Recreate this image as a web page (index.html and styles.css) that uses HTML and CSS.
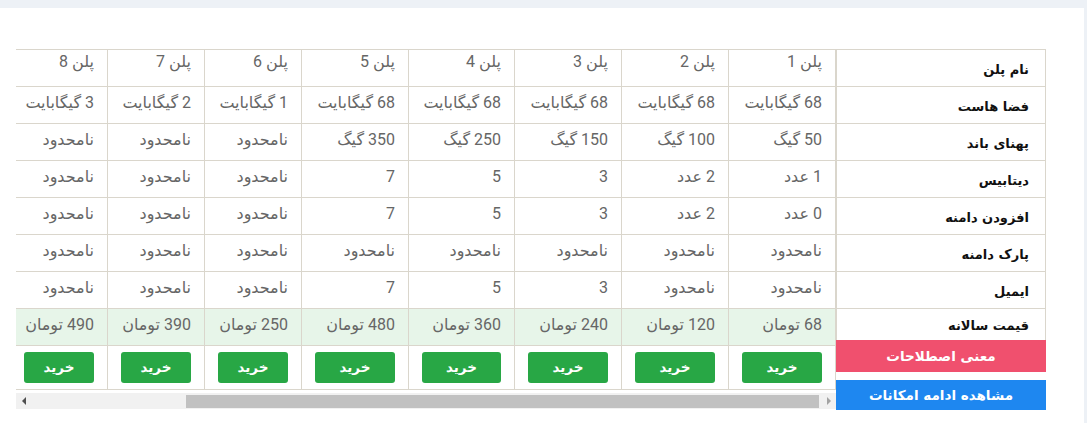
FILE: index.html
```html
<!DOCTYPE html>
<html lang="fa">
<head>
<meta charset="utf-8">
<title>مقایسه پلن‌ها</title>
<link rel="stylesheet" href="styles.css">
</head>
<body>
<div class="page">
  <div class="panel">
    <div class="compare" dir="rtl">
      <div class="labels">
        <table class="label-table">
          <tr><th>نام پلن</th></tr>
          <tr><th>فضا هاست</th></tr>
          <tr><th>پهنای باند</th></tr>
          <tr><th>دیتابیس</th></tr>
          <tr><th>افزودن دامنه</th></tr>
          <tr><th>پارک دامنه</th></tr>
          <tr><th>ایمیل</th></tr>
          <tr class="price-label"><th>قیمت سالانه</th></tr>
        </table>
        <a class="side-btn btn-terms">معنی اصطلاحات</a>
        <a class="side-btn btn-more">مشاهده ادامه امکانات</a>
      </div>
      <div class="plans-area">
        <div class="plans-viewport">
          <table class="plans">
            <colgroup>
              <col class="c-wide"><col class="c-wide"><col class="c-wide"><col class="c-mid"><col class="c-wide"><col class="c-narrow"><col class="c-narrow"><col class="c-narrow">
            </colgroup>
            <thead>
              <tr class="head-row"><th>پلن 1</th><th>پلن 2</th><th>پلن 3</th><th>پلن 4</th><th>پلن 5</th><th>پلن 6</th><th>پلن 7</th><th>پلن 8</th></tr>
            </thead>
            <tbody>
              <tr><td>68 گیگابایت</td><td>68 گیگابایت</td><td>68 گیگابایت</td><td>68 گیگابایت</td><td>68 گیگابایت</td><td>1 گیگابایت</td><td>2 گیگابایت</td><td>3 گیگابایت</td></tr>
              <tr><td>50 گیگ</td><td>100 گیگ</td><td>150 گیگ</td><td>250 گیگ</td><td>350 گیگ</td><td>نامحدود</td><td>نامحدود</td><td>نامحدود</td></tr>
              <tr><td>1 عدد</td><td>2 عدد</td><td>3</td><td>5</td><td>7</td><td>نامحدود</td><td>نامحدود</td><td>نامحدود</td></tr>
              <tr><td>0 عدد</td><td>2 عدد</td><td>3</td><td>5</td><td>7</td><td>نامحدود</td><td>نامحدود</td><td>نامحدود</td></tr>
              <tr><td>نامحدود</td><td>نامحدود</td><td>نامحدود</td><td>نامحدود</td><td>نامحدود</td><td>نامحدود</td><td>نامحدود</td><td>نامحدود</td></tr>
              <tr><td>نامحدود</td><td>نامحدود</td><td>3</td><td>5</td><td>7</td><td>نامحدود</td><td>نامحدود</td><td>نامحدود</td></tr>
              <tr class="price-row"><td>68 تومان</td><td>120 تومان</td><td>240 تومان</td><td>360 تومان</td><td>480 تومان</td><td>250 تومان</td><td>390 تومان</td><td>490 تومان</td></tr>
              <tr class="buy-row"><td><a class="buy">خرید</a></td><td><a class="buy">خرید</a></td><td><a class="buy">خرید</a></td><td><a class="buy">خرید</a></td><td><a class="buy">خرید</a></td><td><a class="buy">خرید</a></td><td><a class="buy">خرید</a></td><td><a class="buy">خرید</a></td></tr>
            </tbody>
          </table>
        </div>
        <div class="hscroll" dir="ltr">
          <span class="hs-btn"><span class="tri tri-left"></span></span>
          <div class="hs-track"><div class="hs-thumb"></div></div>
          <span class="hs-btn"><span class="tri tri-right"></span></span>
        </div>
      </div>
    </div>
  </div>
</div>
</body>
</html>
```
FILE: styles.css
```css
html, body {
  margin: 0;
  padding: 0;
}
body {
  background: #edf1f6;
  font-family: Roboto, "DejaVu Sans", sans-serif;
}
.page {
  padding-top: 8px;
  height: 415px;
}
.panel {
  background: #ffffff;
  width: 1084px;
  height: 415px;
  box-sizing: border-box;
  padding: 41px 38px 0 16px;
}
.compare {
  display: flex;
  align-items: flex-start;
}

/* label column */
.labels {
  width: 210px;
  flex: none;
}
.label-table {
  border-collapse: collapse;
  width: 210px;
}
.label-table th {
  border: 1px solid #dad6cc;
  height: 37px;
  padding: 2px 16px 0;
  text-align: right;
  font-family: "DejaVu Sans", sans-serif;
  font-weight: 700;
  font-size: 13px;
  color: #111;
  box-sizing: border-box;
}
.label-table .price-label th {
  height: 31px;
  border-bottom: none;
}
.side-btn {
  display: block;
  color: #fff;
  text-align: center;
  font-family: "DejaVu Sans", sans-serif;
  font-weight: 700;
  font-size: 13.5px;
}
.btn-terms {
  background: #f0506e;
  height: 32px;
  line-height: 32px;
}
.btn-more {
  background: #1e87f0;
  height: 30px;
  line-height: 30px;
  margin-top: 8px;
}

/* plans */
.plans-area {
  width: 820px;
  flex: none;
}
.plans-viewport {
  width: 820px;
  overflow: hidden;
}
.plans {
  border-collapse: collapse;
  table-layout: fixed;
  width: 825px;
}
.c-wide { width: 107px; }
.c-mid { width: 106px; }
.c-narrow { width: 97px; }
.plans th,
.plans td {
  border: 1px solid #dad6cc;
  text-align: right;
  white-space: nowrap;
  font-weight: 400;
  font-size: 16px;
  line-height: 20px;
  color: #666;
  padding: 6px 13px 0;
  height: 30px;
  vertical-align: top;
}
.plans .head-row th {
  padding-top: 2px;
  height: 34px;
}
.price-row td {
  background: #e7f5e9;
}
.plans .buy-row td {
  padding: 6px 13px;
  height: 31px;
}
.buy {
  display: block;
  height: 31px;
  line-height: 31px;
  background: #28a745;
  border-radius: 3px;
  color: #fff;
  text-align: center;
  font-family: "DejaVu Sans", sans-serif;
  font-weight: 700;
  font-size: 13.5px;
}

/* faux horizontal scrollbar */
.hscroll {
  display: flex;
  height: 16px;
  margin-top: 3px;
  background: #f1f1f1;
}
.hs-btn {
  width: 15px;
  flex: none;
  display: flex;
  align-items: center;
  justify-content: center;
}
.tri {
  width: 0;
  height: 0;
  border-top: 4px solid transparent;
  border-bottom: 4px solid transparent;
}
.tri-left {
  border-right: 4px solid #505050;
}
.tri-right {
  border-left: 4px solid #a3a3a3;
}
.hs-track {
  flex: 1;
  display: flex;
  justify-content: flex-end;
  align-items: center;
}
.hs-thumb {
  width: 633px;
  height: 13px;
  margin-right: 2px;
  background: #c1c1c1;
}
```
